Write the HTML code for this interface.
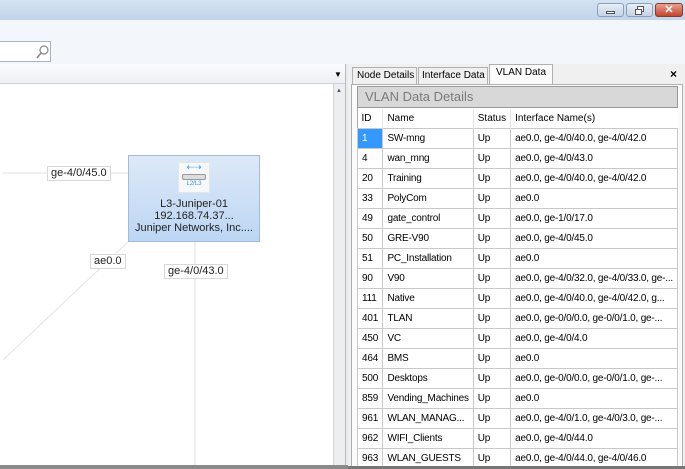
<!DOCTYPE html>
<html><head><style>
*{margin:0;padding:0;box-sizing:border-box}
body{width:685px;height:469px;overflow:hidden;background:#fff;font-family:"Liberation Sans",sans-serif;font-size:11px;position:relative;color:#000}
.abs{position:absolute}
.lbl{position:absolute;background:#fff;border:1px solid #d8d8d8;font-size:11px;line-height:13px;padding:0 3px;color:#222}
table{border-collapse:collapse;font-size:10px;position:absolute;left:357px;top:110px;width:321px}
td{border:1px solid #c8c8c8;height:20px;padding:0 4px;white-space:nowrap;overflow:hidden;letter-spacing:-0.2px}
th{font-weight:normal;text-align:left;height:18px;padding:0 4px;border-left:1px solid #e4e4e4;font-size:10px}
</style></head><body>
<div class="abs" style="left:0;top:0;width:685px;height:20px;background:linear-gradient(#d5e3f2,#c1d4ea)"></div>
<div class="abs" style="left:597px;top:3px;width:27px;height:14px;border:1px solid #8aa0ba;border-radius:3px;background:linear-gradient(#e6eef8,#c4d3e6)"><div class="abs" style="left:8px;top:7px;width:9px;height:3px;background:#fff;border:1px solid #555"></div></div>
<div class="abs" style="left:626px;top:3px;width:27px;height:14px;border:1px solid #8aa0ba;border-radius:3px;background:linear-gradient(#e6eef8,#c4d3e6)"><div class="abs" style="left:10px;top:2px;width:7px;height:6px;border:1px solid #555;background:#fff"></div><div class="abs" style="left:8px;top:5px;width:7px;height:6px;border:1px solid #555;background:#fff"></div></div>
<div class="abs" style="left:655px;top:3px;width:28px;height:14px;border:1px solid #8a3a2a;border-radius:3px;background:linear-gradient(#e8a090,#c2452e);color:#fff;font-weight:bold;text-align:center;line-height:12px;font-size:11px">✕</div>
<div class="abs" style="left:0;top:20px;width:685px;height:44px;background:#f3f6fa"></div>
<div class="abs" style="left:0;top:41px;width:51px;height:21px;background:#fff;border:1px solid #a9b4c2;border-left:none"><svg class="abs" style="left:36px;top:2px" width="14" height="16"><circle cx="8" cy="6" r="4" fill="none" stroke="#888" stroke-width="1.2"/><path d="M5 9L1 14" stroke="#888" stroke-width="1.5"/></svg></div>
<div class="abs" style="left:0;top:64px;width:345px;height:20px;background:linear-gradient(#fafbfc,#eef0f3);border-bottom:1px solid #c9d2dc"></div>
<div class="abs" style="left:334px;top:70px;font-size:8px">▼</div>
<div class="abs" style="left:333px;top:84px;width:12px;height:382px;background:#eceef0;border-left:1px solid #d0d4d8"></div>
<div class="abs" style="left:336px;top:88px;font-size:6px;color:#555">▲</div>
<div class="abs" style="left:345px;top:64px;width:3px;height:405px;background:#e9ecef;border-left:1px solid #bbb"></div>
<div class="abs" style="left:0;top:465px;width:348px;height:4px;background:#8a8a8a"></div>
<!-- canvas -->
<svg class="abs" style="left:0;top:84px" width="333" height="381"><path d="M3 89H128" stroke="#e0e0e0"/><path d="M128 158L3 276" stroke="#e4e4e4"/><path d="M195 158V381" stroke="#e0e0e0"/></svg>
<div class="lbl" style="left:47px;top:166px">ge-4/0/45.0</div>
<div class="lbl" style="left:90px;top:254px">ae0.0</div>
<div class="lbl" style="left:164px;top:264px">ge-4/0/43.0</div>
<div class="abs" style="left:128px;top:155px;width:132px;height:87px;border:1px solid #9fbcdd;background:linear-gradient(#dde9f7,#bcd6f4);text-align:center;font-size:11px;line-height:12px;color:#222">
<div style="margin:6px auto 0;width:32px;height:31px;background:#f6f8fa;border:1px solid #e2e6ea;position:relative"><div style="color:#2a9be0;font-size:9px;line-height:9px">⇠⇢</div><div style="margin:2px auto 0;width:24px;height:6px;border:1px solid #999;border-radius:2px;background:#ddd"></div><div style="color:#2a9be0;font-size:6px;line-height:8px">L2/L3</div></div>
<div style="margin-top:5px">L3-Juniper-01</div><div>192.168.74.37...</div><div>Juniper Networks, Inc....</div></div>
<!-- right panel -->
<div class="abs" style="left:348px;top:64px;width:337px;height:405px;background:#f0f0f0"></div>
<div class="abs" style="left:352px;top:67px;width:65px;height:17px;border:1px solid #b0b0b0;border-bottom:none;font-size:10px;line-height:15px;padding-left:4px">Node Details</div>
<div class="abs" style="left:418px;top:67px;width:70px;height:17px;border:1px solid #b0b0b0;border-bottom:none;font-size:10px;line-height:15px;padding-left:3px">Interface Data</div>
<div class="abs" style="left:489px;top:64px;width:64px;height:21px;border:1px solid #b0b0b0;border-bottom:none;background:#fbfbfb;font-size:10px;line-height:16px;padding-left:6px">VLAN Data</div>
<div class="abs" style="left:670px;top:67px;font-weight:bold;font-size:12px">×</div>
<div class="abs" style="left:351px;top:84px;width:332px;height:385px;background:#fbfbfb;border:1px solid #b0b0b0"></div>
<div class="abs" style="left:357px;top:86px;width:321px;height:22px;background:#d8d8d8;border:1px solid #999;color:#7a7a7a;font-size:13px;line-height:20px;padding-left:7px">VLAN Data Details</div>
<div class="abs" style="left:357px;top:108px;width:321px;height:361px;background:#fff;border-left:1px solid #aaa"></div>
<table>
<tr><th style="width:29px;border-left:none">ID</th><th style="width:89px">Name</th><th style="width:35px">Status</th><th>Interface Name(s)</th></tr>
<tr><td style="background:#3399ff;color:#fff">1</td><td>SW-mng</td><td>Up</td><td>ae0.0, ge-4/0/40.0, ge-4/0/42.0</td></tr>
<tr><td>4</td><td>wan_mng</td><td>Up</td><td>ae0.0, ge-4/0/43.0</td></tr>
<tr><td>20</td><td>Training</td><td>Up</td><td>ae0.0, ge-4/0/40.0, ge-4/0/42.0</td></tr>
<tr><td>33</td><td>PolyCom</td><td>Up</td><td>ae0.0</td></tr>
<tr><td>49</td><td>gate_control</td><td>Up</td><td>ae0.0, ge-1/0/17.0</td></tr>
<tr><td>50</td><td>GRE-V90</td><td>Up</td><td>ae0.0, ge-4/0/45.0</td></tr>
<tr><td>51</td><td>PC_Installation</td><td>Up</td><td>ae0.0</td></tr>
<tr><td>90</td><td>V90</td><td>Up</td><td>ae0.0, ge-4/0/32.0, ge-4/0/33.0, ge-...</td></tr>
<tr><td>111</td><td>Native</td><td>Up</td><td>ae0.0, ge-4/0/40.0, ge-4/0/42.0, g...</td></tr>
<tr><td>401</td><td>TLAN</td><td>Up</td><td>ae0.0, ge-0/0/0.0, ge-0/0/1.0, ge-...</td></tr>
<tr><td>450</td><td>VC</td><td>Up</td><td>ae0.0, ge-4/0/4.0</td></tr>
<tr><td>464</td><td>BMS</td><td>Up</td><td>ae0.0</td></tr>
<tr><td>500</td><td>Desktops</td><td>Up</td><td>ae0.0, ge-0/0/0.0, ge-0/0/1.0, ge-...</td></tr>
<tr><td>859</td><td>Vending_Machines</td><td>Up</td><td>ae0.0</td></tr>
<tr><td>961</td><td>WLAN_MANAG...</td><td>Up</td><td>ae0.0, ge-4/0/1.0, ge-4/0/3.0, ge-...</td></tr>
<tr><td>962</td><td>WIFI_Clients</td><td>Up</td><td>ae0.0, ge-4/0/44.0</td></tr>
<tr><td>963</td><td>WLAN_GUESTS</td><td>Up</td><td>ae0.0, ge-4/0/44.0, ge-4/0/46.0</td></tr>
</table>
<div class="abs" style="left:348px;top:466px;width:337px;height:3px;background:#777"></div>
</body></html>
